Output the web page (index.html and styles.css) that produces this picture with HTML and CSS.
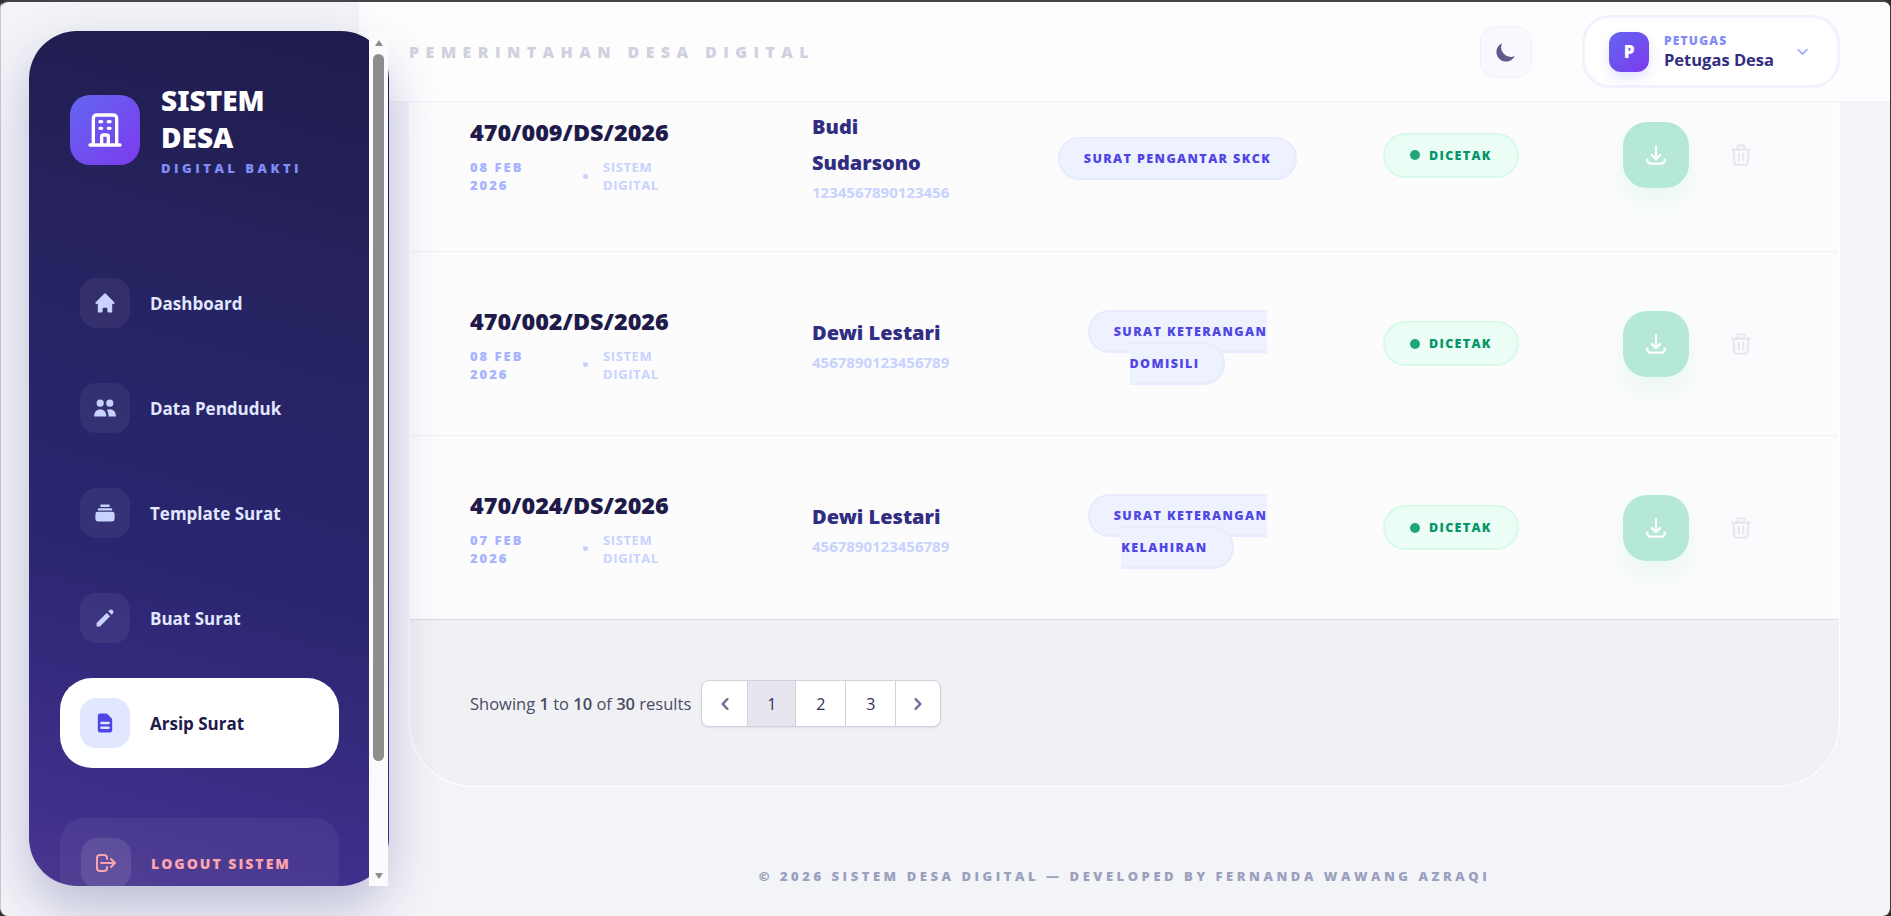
FILE: index.html
```html
<!DOCTYPE html>
<html lang="en">
<head>
    <meta charset="UTF-8">
    <meta name="viewport" content="width=device-width, initial-scale=1.0">
    <title>Arsip Surat - Sistem Desa</title>
    <link rel="stylesheet" href="styles.css">
</head>
<body>
    <svg class="sprite" aria-hidden="true">
        <symbol id="i-download" viewBox="0 0 24 24"><path d="M4 16v1a3 3 0 003 3h10a3 3 0 003-3v-1m-4-4l-4 4m0 0l-4-4m4 4V4" fill="none" stroke="currentColor" stroke-width="2" stroke-linecap="round" stroke-linejoin="round"/></symbol>
        <symbol id="i-trash" viewBox="0 0 24 24"><path d="M19 7l-.867 12.142A2 2 0 0116.138 21H7.862a2 2 0 01-1.995-1.858L5 7m5 4v6m4-6v6m1-10V4a1 1 0 00-1-1h-4a1 1 0 00-1 1v3M4 7h16" fill="none" stroke="currentColor" stroke-width="2" stroke-linecap="round" stroke-linejoin="round"/></symbol>
    </svg>

    <div class="window">
        <div class="side-wrap">
            <aside class="sidebar">
                <div class="brand">
                    <div class="brand-icon">
                        <svg viewBox="0 0 24 24" width="40" height="40"><path d="M19 21V5a2 2 0 00-2-2H7a2 2 0 00-2 2v16m14 0h2m-2 0h-5m-9 0H3m2 0h5M9 7h1m-1 4h1m4-4h1m-1 4h1m-5 10v-5a1 1 0 011-1h2a1 1 0 011 1v5m-4 0h4" fill="none" stroke="currentColor" stroke-width="2" stroke-linecap="round" stroke-linejoin="round"/></svg>
                    </div>
                    <div class="brand-text">
                        <h1 class="brand-title">SISTEM DESA</h1>
                        <div class="brand-sub">DIGITAL BAKTI</div>
                    </div>
                </div>
                <nav class="menu">
                    <a class="menu-item">
                        <span class="menu-icon"><svg viewBox="0 0 20 20" width="24" height="24" fill="currentColor"><path d="M10.707 2.293a1 1 0 00-1.414 0l-7 7a1 1 0 001.414 1.414L4 10.414V17a1 1 0 001 1h2a1 1 0 001-1v-2a1 1 0 011-1h2a1 1 0 011 1v2a1 1 0 001 1h2a1 1 0 001-1v-6.586l.293.293a1 1 0 001.414-1.414l-7-7z"/></svg></span>
                        Dashboard
                    </a>
                    <a class="menu-item">
                        <span class="menu-icon"><svg viewBox="0 0 20 20" width="24" height="24" fill="currentColor"><path d="M9 6a3 3 0 11-6 0 3 3 0 016 0zM17 6a3 3 0 11-6 0 3 3 0 016 0zM12.93 17c.046-.327.07-.66.07-1a6.97 6.97 0 00-1.5-4.33A5 5 0 0119 16v1h-6.07zM6 11a5 5 0 015 5v1H1v-1a5 5 0 015-5z"/></svg></span>
                        Data Penduduk
                    </a>
                    <a class="menu-item">
                        <span class="menu-icon"><svg viewBox="0 0 20 20" width="24" height="24" fill="currentColor"><path d="M7 3a1 1 0 000 2h6a1 1 0 100-2H7zM4 7a1 1 0 011-1h10a1 1 0 110 2H5a1 1 0 01-1-1zM2 11a2 2 0 012-2h12a2 2 0 012 2v4a2 2 0 01-2 2H4a2 2 0 01-2-2v-4z"/></svg></span>
                        Template Surat
                    </a>
                    <a class="menu-item">
                        <span class="menu-icon"><svg viewBox="0 0 20 20" width="24" height="24" fill="currentColor"><path d="M13.586 3.586a2 2 0 112.828 2.828l-.793.793-2.828-2.828.793-.793zM11.379 5.793L3 14.172V17h2.828l8.38-8.379-2.83-2.828z"/></svg></span>
                        Buat Surat
                    </a>
                    <a class="menu-item active">
                        <span class="menu-icon"><svg viewBox="0 0 20 20" width="24" height="24" fill="currentColor"><path fill-rule="evenodd" d="M4 4a2 2 0 012-2h4.586A2 2 0 0112 2.586L15.414 6A2 2 0 0116 7.414V16a2 2 0 01-2 2H6a2 2 0 01-2-2V4zm2 6a1 1 0 011-1h6a1 1 0 110 2H7a1 1 0 01-1-1zm1 3a1 1 0 100 2h6a1 1 0 100-2H7z"/></svg></span>
                        Arsip Surat
                    </a>
                </nav>
                <a class="logout">
                    <span class="logout-icon"><svg viewBox="0 0 24 24" width="24" height="24"><path d="M17 16l4-4m0 0l-4-4m4 4H7m6 4v1a3 3 0 01-3 3H6a3 3 0 01-3-3V7a3 3 0 013-3h4a3 3 0 013 3v1" fill="none" stroke="currentColor" stroke-width="2" stroke-linecap="round" stroke-linejoin="round"/></svg></span>
                    LOGOUT SISTEM
                </a>
            </aside>
            <div class="scrollbar">
                <span class="arrow-up"></span>
                <span class="thumb"></span>
                <span class="arrow-down"></span>
            </div>
        </div>

        <main class="main">
            <header class="topbar">
                <div class="top-title">PEMERINTAHAN DESA DIGITAL</div>
                <button class="theme-btn"><svg viewBox="0 0 20 20" width="24" height="24" fill="currentColor"><path d="M17.293 13.293A8 8 0 016.707 2.707a8.001 8.001 0 1010.586 10.586z"/></svg></button>
                <div class="user-box">
                    <div class="avatar">P</div>
                    <div class="user-text">
                        <div class="user-role">PETUGAS</div>
                        <div class="user-name">Petugas Desa</div>
                    </div>
                    <svg class="user-caret" viewBox="0 0 24 24" width="15" height="15"><path d="M19 9l-7 7-7-7" fill="none" stroke="currentColor" stroke-width="3" stroke-linecap="round" stroke-linejoin="round"/></svg>
                </div>
            </header>

            <div class="content">
                <section class="card">
                    <div class="row row-first">
                        <div>
                            <div class="nomor">470/009/DS/2026</div>
                            <div class="meta">
                                <span class="meta-date">08 FEB<br>2026</span>
                                <span class="meta-dot"></span>
                                <span class="meta-src">SISTEM<br>DIGITAL</span>
                            </div>
                        </div>
                        <div>
                            <div class="warga">Budi Sudarsono</div>
                            <div class="nik">1234567890123456</div>
                        </div>
                        <div class="jenis-cell"><span class="jenis">SURAT PENGANTAR SKCK</span></div>
                        <div class="status-cell"><span class="status"><i class="status-dot"></i>DICETAK</span></div>
                        <div class="actions">
                            <button class="btn-dl"><svg width="26" height="26"><use href="#i-download"/></svg></button>
                            <button class="btn-del"><svg width="26" height="26"><use href="#i-trash"/></svg></button>
                        </div>
                    </div>

                    <div class="row">
                        <div>
                            <div class="nomor">470/002/DS/2026</div>
                            <div class="meta">
                                <span class="meta-date">08 FEB<br>2026</span>
                                <span class="meta-dot"></span>
                                <span class="meta-src">SISTEM<br>DIGITAL</span>
                            </div>
                        </div>
                        <div>
                            <div class="warga">Dewi Lestari</div>
                            <div class="nik">4567890123456789</div>
                        </div>
                        <div class="jenis-cell"><span class="jenis">SURAT KETERANGAN DOMISILI</span></div>
                        <div class="status-cell"><span class="status"><i class="status-dot"></i>DICETAK</span></div>
                        <div class="actions">
                            <button class="btn-dl"><svg width="26" height="26"><use href="#i-download"/></svg></button>
                            <button class="btn-del"><svg width="26" height="26"><use href="#i-trash"/></svg></button>
                        </div>
                    </div>

                    <div class="row">
                        <div>
                            <div class="nomor">470/024/DS/2026</div>
                            <div class="meta">
                                <span class="meta-date">07 FEB<br>2026</span>
                                <span class="meta-dot"></span>
                                <span class="meta-src">SISTEM<br>DIGITAL</span>
                            </div>
                        </div>
                        <div>
                            <div class="warga">Dewi Lestari</div>
                            <div class="nik">4567890123456789</div>
                        </div>
                        <div class="jenis-cell"><span class="jenis">SURAT KETERANGAN KELAHIRAN</span></div>
                        <div class="status-cell"><span class="status"><i class="status-dot"></i>DICETAK</span></div>
                        <div class="actions">
                            <button class="btn-dl"><svg width="26" height="26"><use href="#i-download"/></svg></button>
                            <button class="btn-del"><svg width="26" height="26"><use href="#i-trash"/></svg></button>
                        </div>
                    </div>

                    <div class="card-foot">
                        <p class="showing">Showing <b>1</b> to <b>10</b> of <b>30</b> results</p>
                        <div class="pager">
                            <a class="pg pg-prev"><svg viewBox="0 0 20 20" width="24" height="24" fill="currentColor"><path fill-rule="evenodd" d="M12.707 5.293a1 1 0 010 1.414L9.414 10l3.293 3.293a1 1 0 01-1.414 1.414l-4-4a1 1 0 010-1.414l4-4a1 1 0 011.414 0z"/></svg></a>
                            <a class="pg pg-on">1</a>
                            <a class="pg">2</a>
                            <a class="pg">3</a>
                            <a class="pg pg-next"><svg viewBox="0 0 20 20" width="24" height="24" fill="currentColor"><path fill-rule="evenodd" d="M7.293 14.707a1 1 0 010-1.414L10.586 10 7.293 6.707a1 1 0 011.414-1.414l4 4a1 1 0 010 1.414l-4 4a1 1 0 01-1.414 0z"/></svg></a>
                        </div>
                    </div>
                </section>
                <footer class="copyright">© 2026 SISTEM DESA DIGITAL — DEVELOPED BY FERNANDA WAWANG AZRAQI</footer>
            </div>
        </main>
    </div>
</body>
</html>
```

FILE: styles.css
```css
*{
    box-sizing: border-box;
}
html,body{
    height: 100%;
}
body{
    margin: 0;
    background-color: #2e2e30;
    font-family: "Open Sans", "Noto Sans", sans-serif;
    overflow: hidden;
}
a{
    text-decoration: none;
}
button{
    font-family: inherit;
    cursor: pointer;
}
.sprite{
    display: none;
}
.window{
    display: flex;
    height: 916px;
    background-color: #f3f4f8;
    border-top: 2px solid #44444a;
    border-left: 1px solid #c6c6cc;
    border-right: 1px solid #3a3a3e;
    border-radius: 8px;
    overflow: hidden;
}

/* sidebar */
.side-wrap{
    position: relative;
    z-index: 3;
    flex: none;
    width: 360px;
    height: 855px;
    margin: 29px 0 0 28px;
    border-radius: 48px;
    box-shadow: 0 22px 50px rgba(49,46,129,.28);
}
.sidebar{
    height: 100%;
    padding: 51px 0 0 31px;
    border-radius: 48px;
    overflow: hidden;
    background: linear-gradient(195deg, #1e1b4b 0%, #26235f 28%, #2a2670 62%, #3f2f8a 90%, #4a3690 100%);
}
.scrollbar{
    position: absolute;
    top: 0;
    right: 1px;
    bottom: 0;
    width: 19px;
    background-color: #fbfbfd;
    display: flex;
    flex-direction: column;
    align-items: center;
    padding: 9px 0 7px;
}
.thumb{
    width: 11px;
    height: 707px;
    margin: 8px 0 auto;
    border-radius: 6px;
    background-color: #8d8d8d;
}
.arrow-up,.arrow-down{
    width: 0;
    height: 0;
    border-left: 4px solid transparent;
    border-right: 4px solid transparent;
}
.arrow-up{
    border-bottom: 6px solid #8d8d8d;
}
.arrow-down{
    border-top: 6px solid #8d8d8d;
}
.brand{
    display: flex;
    align-items: center;
    gap: 21px;
    padding-left: 10px;
}
.brand-icon{
    flex: none;
    width: 70px;
    height: 70px;
    border-radius: 20px;
    display: flex;
    align-items: center;
    justify-content: center;
    color: #fff;
    background: linear-gradient(135deg, #6366f1, #7c3aed);
}
.brand-title{
    margin: 0;
    width: 130px;
    font-family: "Noto Sans", sans-serif;
    font-size: 28px;
    line-height: 37px;
    font-weight: 900;
    color: #fff;
}
.brand-sub{
    margin-top: 3px;
    font-size: 13px;
    line-height: 18px;
    font-weight: 800;
    letter-spacing: 3.5px;
    color: #818cf8;
    white-space: nowrap;
}
.menu{
    display: flex;
    flex-direction: column;
    gap: 15px;
    margin-top: 81px;
    width: 279px;
}
.menu-item{
    display: flex;
    align-items: center;
    gap: 20px;
    height: 90px;
    padding-left: 20px;
    border-radius: 32px;
    font-size: 17px;
    font-weight: 700;
    color: #e0e7ff;
}
.menu-icon{
    flex: none;
    width: 50px;
    height: 50px;
    border-radius: 16px;
    display: flex;
    align-items: center;
    justify-content: center;
    color: #c7d2fe;
    background-color: rgba(255,255,255,.06);
}
.menu-item.active{
    background-color: #fff;
    color: #1e1b4b;
}
.menu-item.active .menu-icon{
    background-color: #e0e7ff;
    color: #4f46e5;
}
.logout{
    display: flex;
    align-items: center;
    gap: 20px;
    width: 279px;
    height: 90px;
    margin-top: 50px;
    padding-left: 21px;
    border-radius: 24px;
    background-color: rgba(255,255,255,.05);
    font-size: 14px;
    font-weight: 800;
    letter-spacing: 2px;
    color: #fda4af;
}
.logout-icon{
    flex: none;
    width: 50px;
    height: 50px;
    border-radius: 16px;
    display: flex;
    align-items: center;
    justify-content: center;
    background-color: rgba(255,255,255,.1);
}

/* top bar */
.main{
    flex: 1;
    min-width: 0;
    margin-left: -30px;
    display: flex;
    flex-direction: column;
}
.topbar{
    position: relative;
    z-index: 2;
    flex: none;
    height: 100px;
    display: flex;
    align-items: center;
    padding-left: 50px;
    background-color: #fdfdfe;
    border-bottom: 1px solid #f0f1fb;
}
.top-title{
    flex: 1;
    font-size: 16px;
    font-weight: 800;
    letter-spacing: 6.4px;
    color: #d0d1e0;
}
.theme-btn{
    width: 52px;
    height: 52px;
    padding: 0;
    margin-right: 50px;
    border: 1px solid #eef0fb;
    border-radius: 16px;
    background-color: #f8f9fe;
    color: #5f5a8a;
    display: flex;
    align-items: center;
    justify-content: center;
}
.user-box{
    width: 258px;
    height: 73px;
    margin-right: 50px;
    display: flex;
    align-items: center;
    padding-left: 24px;
    border: 3px solid #f0f2fe;
    border-radius: 28px;
    background-color: #fff;
}
.avatar{
    flex: none;
    width: 40px;
    height: 40px;
    border-radius: 12px;
    display: flex;
    align-items: center;
    justify-content: center;
    font-size: 17px;
    font-weight: 800;
    color: #fff;
    background: linear-gradient(135deg, #6366f1, #7c3aed);
    box-shadow: 0 6px 12px rgba(99,102,241,.18);
}
.user-text{
    margin-left: 15px;
    flex: 1;
}
.user-role{
    font-size: 12px;
    line-height: 16px;
    font-weight: 800;
    letter-spacing: 1.2px;
    color: #818cf8;
}
.user-name{
    font-size: 16.5px;
    line-height: 22px;
    font-weight: 700;
    color: #312e81;
}
.user-caret{
    margin-right: 27px;
    color: #a5b4fc;
}

/* table card */
.content{
    flex: 1;
    margin-top: -43px;
    padding: 0 50px 0 50px;
    min-height: 0;
}
.card{
    height: 728px;
    border-radius: 0 0 64px 64px;
    border: 1px solid #fff;
    border-top: none;
    overflow: hidden;
    background-color: #f0f1f4;
}
.row{
    display: grid;
    grid-template-columns: 342px 240px 251px 320px auto;
    align-items: center;
    height: 184px;
    padding-left: 60px;
    background-color: #fcfcfd;
    border-top: 1px solid #f1f1f6;
}
.row-first{
    height: 192px;
    border-top: none;
}
.nomor{
    font-family: "Noto Sans", sans-serif;
    font-size: 23.4px;
    line-height: 32px;
    font-weight: 900;
    color: #1e1b4b;
}
.meta{
    display: flex;
    align-items: center;
    margin-top: 10px;
    font-size: 13px;
    line-height: 18px;
    font-weight: 800;
    color: #a5b4fc;
}
.meta-date{
    width: 113px;
    letter-spacing: 2px;
}
.meta-dot{
    width: 5px;
    height: 5px;
    border-radius: 50%;
    background-color: #c7d2fe;
}
.meta-src{
    margin-left: 15px;
    font-weight: 700;
    letter-spacing: .6px;
    color: #c7d2fe;
}
.warga{
    max-width: 150px;
    font-family: "Noto Sans", sans-serif;
    font-size: 20px;
    line-height: 36px;
    font-weight: 900;
    color: #312e81;
}
.nik{
    margin-top: 1px;
    font-size: 15px;
    line-height: 20px;
    font-weight: 700;
    color: #c7d2fe;
}
.jenis-cell{
    padding-top: 6px;
    text-align: center;
    line-height: 30px;
}
.jenis{
    padding: 11px 24px;
    border: 2px solid #e8ebfd;
    border-radius: 24px;
    background-color: #eef2ff;
    font-size: 12.5px;
    font-weight: 800;
    letter-spacing: 1.4px;
    color: #4f46e5;
}
.status-cell{
    padding-left: 80px;
}
.status{
    display: inline-flex;
    align-items: center;
    gap: 9px;
    height: 45px;
    padding: 0 25px;
    border: 2px solid #d7fae9;
    border-radius: 24px;
    background-color: #ecfdf5;
    font-size: 12.5px;
    font-weight: 800;
    letter-spacing: 1.3px;
    color: #059669;
}
.status-dot{
    width: 10px;
    height: 10px;
    border-radius: 50%;
    background-color: #22a57a;
}
.actions{
    display: flex;
    gap: 19px;
}
.btn-dl,.btn-del{
    width: 66px;
    height: 66px;
    padding: 0;
    border: none;
    border-radius: 24px;
    display: flex;
    align-items: center;
    justify-content: center;
}
.btn-dl{
    background-color: #b5e8d5;
    color: #fff;
    box-shadow: 0 14px 24px rgba(16,185,129,.08);
}
.btn-del{
    background-color: #fbfbfd;
    color: #e6e6ee;
    border: 1px solid #fafafc;
}

.card-foot{
    display: flex;
    align-items: center;
    gap: 10px;
    height: 168px;
    padding: 0 0 0 60px;
    border-top: 1px solid #dcdce8;
}
.showing{
    margin: 0;
    font-size: 16.5px;
    color: #4b4b63;
}
.showing b{
    font-weight: 600;
}
.pager{
    display: flex;
    height: 47px;
    border: 1px solid #d1d2de;
    border-radius: 8px;
    overflow: hidden;
    background-color: #fff;
    box-shadow: 0 1px 2px rgba(30,27,75,.08);
}
.pg{
    width: 50px;
    display: flex;
    align-items: center;
    justify-content: center;
    border-left: 1px solid #d1d2de;
    font-size: 16px;
    font-weight: 500;
    color: #2f2c5f;
}
.pg-prev,.pg-next{
    width: 45px;
    color: #6f6d91;
}
.pg-prev{
    border-left: none;
}
.pg-on{
    width: 48px;
    background-color: #e6e6ef;
}
.copyright{
    margin-top: 80px;
    text-align: center;
    font-size: 13px;
    line-height: 18px;
    font-weight: 800;
    letter-spacing: 3.55px;
    color: #9aa0bd;
}
```
